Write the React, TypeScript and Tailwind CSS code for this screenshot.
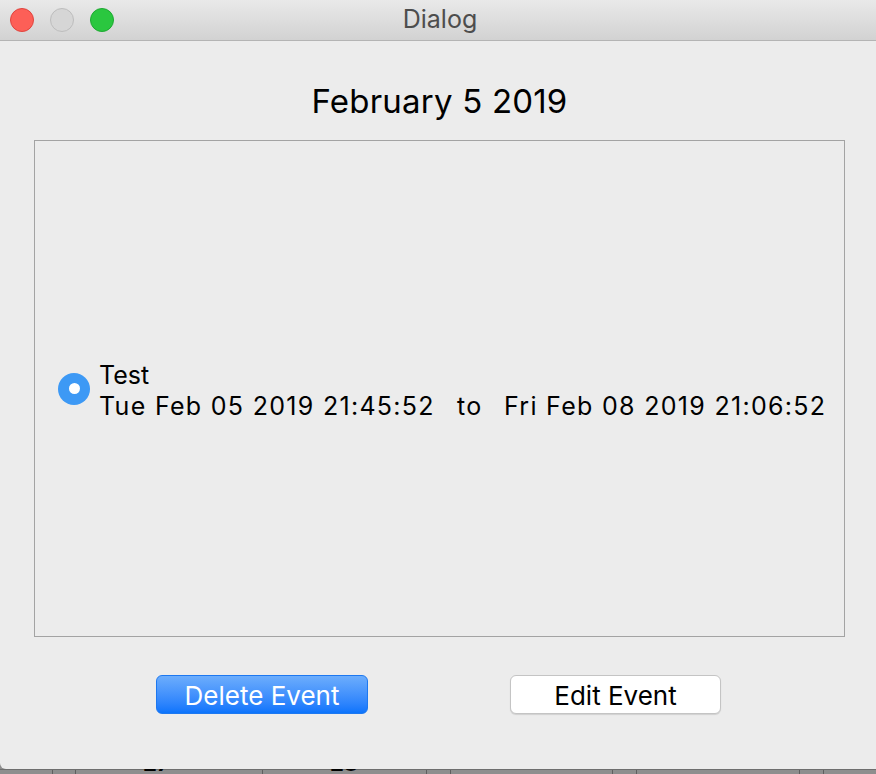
import React from 'react';

const font = { fontFamily: 'Inter, "Noto Sans", sans-serif' };

function TrafficLights() {
  return (
    <div className="flex items-center gap-4 pl-[10px]">
      <span className="h-6 w-6 rounded-full border border-[#e0443e] bg-[#fd5f57]" />
      <span className="h-6 w-6 rounded-full border border-[#bdbdbd] bg-[#d6d6d6]" />
      <span className="h-6 w-6 rounded-full border border-[#1ea932] bg-[#2ac73f]" />
    </div>
  );
}

export default function App() {
  return (
    <div className="relative h-[774px] w-[876px] overflow-hidden bg-[#8e8e8e]" style={font}>
      <div className="relative z-10 flex h-[769px] flex-col overflow-hidden rounded-bl-[6px] bg-[#ececec]">
        {/* title bar */}
        <div className="relative flex h-[41px] shrink-0 items-center border-b border-[#b4b4b4] bg-gradient-to-b from-[#e9e9e9] to-[#d2d2d2]">
          <TrafficLights />
          <div className="absolute inset-0 flex items-center justify-center pl-[4px] text-[25px] text-[#4d4d4d]">
            Dialog
          </div>
        </div>

        <div className="flex flex-1 flex-col pl-[34px] pr-[31px]">
          <h1 className="mt-[38px] h-[61px] text-center text-[33px] leading-[44px] tracking-[0.2px] text-black">
            February 5 2019
          </h1>

          <div className="flex h-[497px] items-center border border-[#a3a3a3] pl-[23px]">
            <div className="flex items-center gap-[9px]">
              <span className="flex h-8 w-8 items-center justify-center rounded-full bg-[#3d99f5]">
                <span className="h-[11px] w-[11px] rounded-full bg-white" />
              </span>
              <div className="mt-[4px] text-[25px] leading-[31px] text-black">
                <div className="tracking-[0px]">Test</div>
                <div className="flex whitespace-nowrap tracking-[1.3px]">
                  <span className="w-[358px]">Tue Feb 05 2019 21:45:52</span>
                  <span className="w-[47px]">to</span>
                  <span>Fri Feb 08 2019 21:06:52</span>
                </div>
              </div>
            </div>
          </div>

          <div className="mt-[38px] flex justify-between pl-[122px] pr-[124px]">
            <button className="h-[39px] w-[212px] rounded-[6px] border border-[#1d78f0] bg-gradient-to-b from-[#6cadfc] to-[#0a74fc] text-[26px] text-white">
              Delete Event
            </button>
            <button className="h-[39px] w-[211px] rounded-[6px] border border-[#c4c4c4] bg-white text-[26px] text-black shadow-[0_1px_1px_rgba(0,0,0,0.12)]">
              Edit Event
            </button>
          </div>
        </div>
      </div>

      {/* calendar behind the dialog */}
      <div className="relative z-0 h-[5px] border-t border-[#6e6e6e]">
        {[52, 75, 262, 426, 450, 612, 636, 799, 823].map((x) => (
          <span key={x} className="absolute top-0 h-full w-px bg-[#5f5f5f]" style={{ left: x }} />
        ))}
        <span className="absolute top-[-18px] left-[143px] text-[22px] font-bold leading-none text-black">27</span>
        <span className="absolute top-[-18px] left-[330px] text-[22px] font-bold leading-none text-black">28</span>
      </div>
    </div>
  );
}
